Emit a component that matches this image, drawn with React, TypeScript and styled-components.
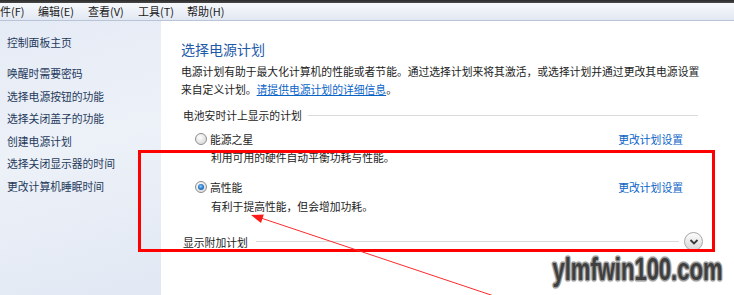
import styled, { createGlobalStyle } from 'styled-components';

const GlobalStyle = createGlobalStyle`
  html, body {
    margin: 0;
    padding: 0;
  }
  body {
    width: 734px;
    height: 295px;
    overflow: hidden;
    background: #fff;
    font-family: "Noto Sans CJK SC", "Liberation Sans", sans-serif;
  }
`;

const Window = styled.div`
  position: relative;
  width: 734px;
  height: 295px;
  display: flex;
  flex-direction: column;
  overflow: hidden;
`;

const TitleStrip = styled.div`
  height: 3px;
  background: linear-gradient(#2b2b2b, #4a4a4a);
`;

const MenuBar = styled.div`
  height: 17px;
  display: flex;
  align-items: center;
  border-bottom: 1px solid #b9c4d8;
  background: linear-gradient(#f7f9fc, #e2e8f2);
  font-size: 11px;
  color: #1a1a1a;
`;

const MenuItem = styled.span<{ $w: number }>`
  flex: 0 0 ${(p) => p.$w}px;
  white-space: nowrap;
  line-height: 17px;
`;

const Body = styled.div`
  flex: 1;
  display: flex;
`;

const Sidebar = styled.nav`
  width: 161px;
  flex: 0 0 161px;
  padding: 10px 0 0 7px;
  box-sizing: border-box;
  background: linear-gradient(165deg, #e5ebf5 0%, #edf1f8 45%, #e1e8f3 100%);
  font-size: 10.8px;
  line-height: 22.5px;
  color: #1e395b;
`;

const NavLink = styled.div<{ $gap?: boolean }>`
  white-space: nowrap;
  margin-bottom: ${(p) => (p.$gap ? '8.5px' : '0')};
`;

const Main = styled.main`
  flex: 1;
  min-width: 0;
  background: #fff;
  padding: 18px 36px 0 20px;
  font-size: 10.8px;
  color: #1c1c1c;
`;

const Title = styled.h1`
  margin: 0;
  font-size: 14px;
  font-weight: normal;
  line-height: 20px;
  color: #1e5aa8;
  white-space: nowrap;
`;

const Description = styled.div`
  margin-top: 3px;
  line-height: 18px;
`;

const Line = styled.div`
  white-space: nowrap;
`;

const Link = styled.a`
  color: #0a64c8;
  text-decoration: underline;
`;

const Divider = styled.div`
  flex: 1;
  height: 1px;
  background: #dadada;
`;

const GroupHeader = styled.div`
  display: flex;
  align-items: center;
  gap: 6px;
  margin: 8px 0 0 2px;
  line-height: 18px;
  white-space: nowrap;
`;

const PlanRow = styled.div<{ $top: number }>`
  display: flex;
  align-items: center;
  margin-top: ${(p) => p.$top}px;
  padding-left: 14px;
  line-height: 18px;
  white-space: nowrap;
`;

const Radio = styled.span<{ $checked?: boolean }>`
  position: relative;
  flex: 0 0 auto;
  box-sizing: border-box;
  width: 12px;
  height: 12px;
  border-radius: 50%;
  border: 1px solid #8c8d8e;
  background: radial-gradient(circle at 40% 35%, #ffffff 0%, #e4e4e4 55%, #c9c9c9 100%);
  box-shadow: inset 0 0 1px #fff;

  &::after {
    content: '';
    display: ${(p) => (p.$checked ? 'block' : 'none')};
    position: absolute;
    left: 2px;
    top: 2px;
    width: 6px;
    height: 6px;
    border-radius: 50%;
    background: radial-gradient(circle at 45% 40%, #8fd0ff 0%, #2f80cf 45%, #104a8a 100%);
  }
`;

const PlanName = styled.span`
  margin-left: 3px;
`;

const PlanLink = styled.a`
  margin: 0 15px 0 auto;
  color: #0a64c8;
  text-decoration: none;
`;

const PlanDesc = styled.div<{ $top: number }>`
  margin-top: ${(p) => p.$top}px;
  padding-left: 30px;
  line-height: 18px;
  white-space: nowrap;
`;

const Footer = styled.div`
  display: flex;
  align-items: center;
  margin: 17px -5px 0 2px;
  line-height: 18px;
  white-space: nowrap;
`;

const FooterLine = styled(Divider)`
  margin: 0 5px 0 8px;
`;

const Chevron = styled.span`
  flex: 0 0 auto;
  width: 17px;
  height: 17px;
  border-radius: 50%;
  border: 1px solid #a7a7a7;
  background: linear-gradient(#fdfdfd, #d8d8d8);
  display: flex;
  align-items: center;
  justify-content: center;
`;

const Highlight = styled.div`
  position: absolute;
  left: 138px;
  top: 150px;
  width: 577px;
  height: 102px;
  box-sizing: border-box;
  border: 3px solid #ff0000;
  pointer-events: none;
`;

const Overlay = styled.svg`
  position: absolute;
  left: 0;
  top: 0;
  pointer-events: none;
`;

const Watermark = styled.div`
  position: absolute;
  right: 12px;
  top: 254px;
  font-family: "Liberation Sans", Arial, sans-serif;
  font-weight: bold;
  font-size: 31px;
  line-height: 31px;
  color: #3f3f3f;
  transform: scaleX(0.71);
  transform-origin: right center;
  text-shadow:
    1px 1px 0 #9a9a9a, -1px -1px 0 #9a9a9a, 1px -1px 0 #9a9a9a, -1px 1px 0 #9a9a9a,
    2px 0 1px #bdbdbd, -2px 0 1px #bdbdbd, 0 2px 1px #bdbdbd, 0 -2px 1px #bdbdbd;
  white-space: nowrap;
`;

const navItems = [
  '唤醒时需要密码',
  '选择电源按钮的功能',
  '选择关闭盖子的功能',
  '创建电源计划',
  '选择关闭显示器的时间',
  '更改计算机睡眠时间',
];

// first menu is scrolled off the left edge in the screenshot
const menus = [
  { label: '件(F)', w: 38 },
  { label: '编辑(E)', w: 50 },
  { label: '查看(V)', w: 50 },
  { label: '工具(T)', w: 49 },
  { label: '帮助(H)', w: 50 },
];

export default function App() {
  return (
    <>
      <GlobalStyle />
      <Window>
        <TitleStrip />
        <MenuBar>
          {menus.map((m) => (
            <MenuItem key={m.label} $w={m.w}>
              {m.label}
            </MenuItem>
          ))}
        </MenuBar>
        <Body>
          <Sidebar>
            <NavLink $gap>控制面板主页</NavLink>
            {navItems.map((n) => (
              <NavLink key={n}>{n}</NavLink>
            ))}
          </Sidebar>
          <Main>
            <Title>选择电源计划</Title>
            <Description>
              <Line>电源计划有助于最大化计算机的性能或者节能。通过选择计划来将其激活，或选择计划并通过更改其电源设置</Line>
              <Line>
                来自定义计划。<Link>请提供电源计划的详细信息</Link>。
              </Line>
            </Description>
            <GroupHeader>
              电池安时计上显示的计划
              <Divider />
            </GroupHeader>
            <PlanRow $top={6}>
              <Radio />
              <PlanName>能源之星</PlanName>
              <PlanLink>更改计划设置</PlanLink>
            </PlanRow>
            <PlanDesc $top={0}>利用可用的硬件自动平衡功耗与性能。</PlanDesc>
            <PlanRow $top={12}>
              <Radio $checked />
              <PlanName>高性能</PlanName>
              <PlanLink>更改计划设置</PlanLink>
            </PlanRow>
            <PlanDesc $top={1}>有利于提高性能，但会增加功耗。</PlanDesc>
            <Footer>
              显示附加计划
              <FooterLine />
              <Chevron>
                <svg width="10" height="8" viewBox="0 0 10 8">
                  <polyline points="1.5,2 5,5.5 8.5,2" fill="none" stroke="#3a3a3a" strokeWidth="1.8" />
                </svg>
              </Chevron>
            </Footer>
          </Main>
        </Body>
        <Highlight />
        <Overlay width="734" height="295" viewBox="0 0 734 295">
          <line x1="500" y1="298" x2="258" y2="217" stroke="#ff2a2a" strokeWidth="1" />
          <polygon points="251,215 263.8,214.5 261,223.1" fill="#ff1a1a" />
        </Overlay>
        <Watermark>ylmfwin100.com</Watermark>
      </Window>
    </>
  );
}
